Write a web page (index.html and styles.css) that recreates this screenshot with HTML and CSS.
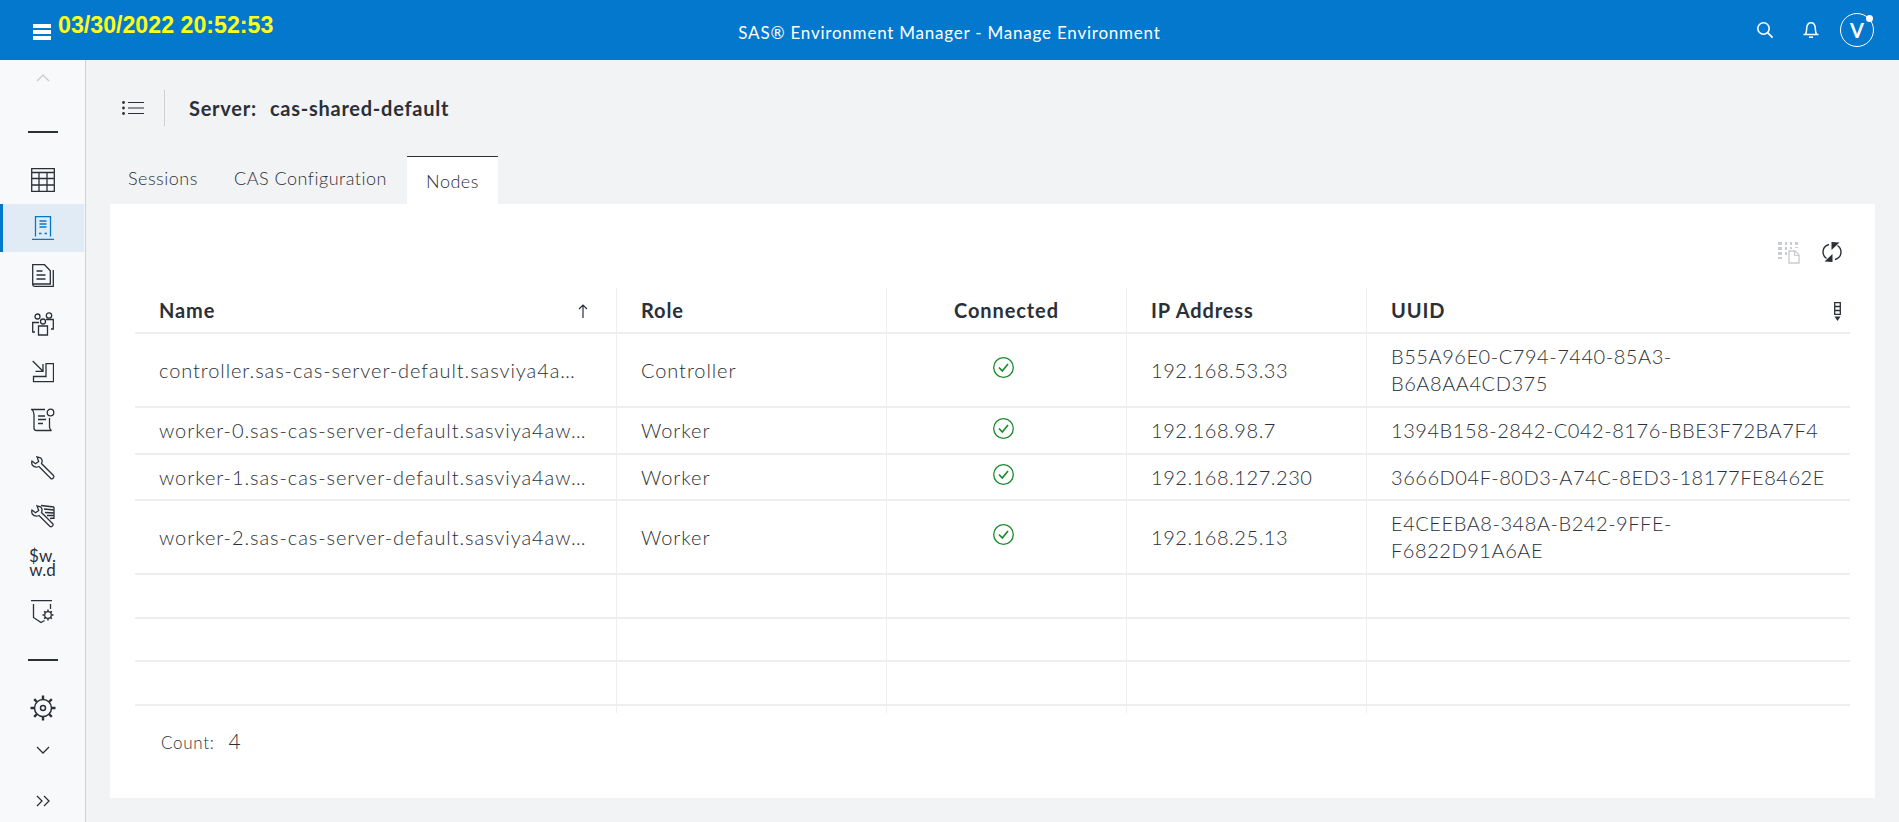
FILE: index.html
```html
<!DOCTYPE html>
<html lang="en">
<head>
<meta charset="utf-8">
<title>SAS Environment Manager</title>
<link rel="stylesheet" href="styles.css">
</head>
<body>
<div class="app">
  <header class="topbar">
    <svg class="hamburger" width="18" height="16" viewBox="0 0 18 16"><path d="M0 0h18v4H0zM0 6h18v4H0zM0 12h18v4H0z" fill="#fff"/></svg>
    <div class="clock">03/30/2022 20:52:53</div>
    <div class="apptitle">SAS® Environment Manager - Manage Environment</div>
    <div class="topicons">
      <svg class="ti" width="18" height="18" viewBox="0 0 18 18" fill="none" stroke="#fff" stroke-width="1.6"><circle cx="7.5" cy="7.5" r="5.7"/><path d="M11.6 11.6l5 5"/></svg>
      <svg class="ti last" width="18" height="18" viewBox="0 0 18 18" fill="none" stroke="#fff" stroke-width="1.5"><path d="M1.5 13.5h15M3.5 13c1.2-1.5 1-3.5 1.2-6C5 3.5 7 1.7 9 1.7S13 3.5 13.3 7c.2 2.500 0 4.500 1.200 6"/><path d="M7 16.200h4" stroke-width="1.600"/></svg>
      <div class="avatar">V<span class="dot"></span></div>
    </div>
  </header>
  <div class="body">
    <nav class="sidebar">
      <div class="nav-top"><svg width="14" height="8" viewBox="0 0 14 8" fill="none" stroke="#c4c8cd" stroke-width="1.200"><path d="M1 7l6-6 6 6"/></svg></div>
      <div class="nav-sep"><span></span></div>
      <div class="nav-item"><svg width="24" height="24" viewBox="0 0 24 24" fill="none" stroke="#2b3038" stroke-width="1.300"><path d="M.7 .7h22.600v22.600H.7zM.7 4.500h22.600M.7 10.500h22.600M.7 17h22.600M8 4.500v18.800M16 4.500v18.800"/></svg></div>
      <div class="nav-item active"><svg width="22" height="24" viewBox="0 0 22 24" fill="none" stroke="#0478cd" stroke-width="1.300"><path d="M3.500 20.500V.7h15v19.800M0 23.300h22M7.500 5h7M7.500 8h7M7.500 11h7M7 17.500h2.500M12.500 17.500h2.500"/></svg></div>
      <div class="nav-item"><svg width="22" height="24" viewBox="0 0 22 24" fill="none" stroke="#2b3038" stroke-width="1.300"><path d="M.7 20V.7h11.800l5.800 6V20zM4.500 7h6M4.500 11h9M4.500 15h9M.7 20v.5c0 1 .8 1.800 1.800 1.800h18.800V6"/></svg></div>
      <div class="nav-item"><svg width="22" height="24" viewBox="0 0 22 24" fill="none" stroke="#2b3038" stroke-width="1.300"><circle cx="5.500" cy="4.500" r="2.500"/><circle cx="17" cy="3.500" r="2.700"/><circle cx="11" cy="9.500" r="2.500"/><path d="M6.500 14h9v9h-9zM3 20H.7v-9.500H7M19 17h2.300V7.500H14"/></svg></div>
      <div class="nav-item"><svg width="22" height="24" viewBox="0 0 22 24" fill="none" stroke="#2b3038" stroke-width="1.300"><path d="M.7 1l10.300 10.300M11 4v7.300H3.500M1.500 21.700H21.500V3.700H14V16.500H1.500z"/></svg></div>
      <div class="nav-item"><svg width="24" height="24" viewBox="0 0 24 24" fill="none" stroke="#2b3038" stroke-width="1.300"><path d="M14 1.500H.7c1.500 1 2.300 2.300 2.300 5v13.500c0 1.500 1 2.500 2.500 2.500h15c-1.200-.6-2-1.500-2-3.500V10M7 8h7M7 11.500h8M7 15.500h5"/><circle cx="19.500" cy="4.500" r="3.300"/></svg></div>
      <div class="nav-item"><svg width="24" height="24" viewBox="0 0 24 24" fill="none" stroke="#2b3038" stroke-width="1.300"><path d="M6 .8L9.500 1.800C11 3 11.500 5.500 10.500 7.500L22.500 19.500C23.500 21 22 23.500 20 22.800L8 10.500C5.500 11.500 3 11 1.500 9.300.7 8 .5 6.500 1 5L4.500 7.800 7.700 5.500z"/></svg></div>
      <div class="nav-item"><svg width="24" height="24" viewBox="0 0 24 24" fill="none" stroke="#2b3038" stroke-width="1.300"><path d="M6 1.800L9.500 2.800C11 4 11.500 6 10.500 8.500L21.500 19.500C23 21 21 23.500 19 22.500L8 11.500C5.500 12.500 3 12 1.500 10.300.7 9 .5 7.500 1 6L4.500 8.800 7.700 6.500z"/><path d="M10 1.500l13 1.500M13 5l10 1M14 8.500l9 .5M16 11.500h6.500M19 14.500l3.500-.5M23 3v12"/></svg></div>
      <div class="nav-item fmt">$w.<br>w.d</div>
      <div class="nav-item"><svg width="24" height="24" viewBox="0 0 24 24" fill="none" stroke="#2b3038" stroke-width="1.300"><path d="M0 .7h21M2.500 4v13.500l7.500 5 3.500-2M19.500 4v5"/><circle cx="17" cy="15" r="3.300"/><path d="M17 9.500v2M17 18.500v2M11.500 15h2M20.500 15h2M13.200 11.200l1.400 1.400M19.400 17.400l1.400 1.400M20.800 11.200l-1.400 1.400M14.600 17.400l-1.400 1.400" stroke-width="1.500"/></svg></div>
      <div class="nav-sep"><span></span></div>
      <div class="nav-item"><svg width="26" height="26" viewBox="0 0 26 26" fill="none" stroke="#2b3038" stroke-width="1.500"><circle cx="13" cy="13" r="8.500"/><circle cx="13" cy="13" r="2.500"/><path d="M13 .5v4M13 21.500v4M.5 13h4M21.500 13h4M4.200 4.200l2.800 2.800M19 19l2.800 2.800M21.800 4.200L19 7M7 19l-2.800 2.800" stroke-width="2.400"/></svg></div>
      <div class="nav-down"><svg width="14" height="8" viewBox="0 0 14 8" fill="none" stroke="#2b3038" stroke-width="1.300"><path d="M1 1l6 6 6-6"/></svg></div>
      <div class="nav-expand"><svg width="14" height="12" viewBox="0 0 14 12" fill="none" stroke="#2b3038" stroke-width="1.300"><path d="M1 1l5 5-5 5M8 1l5 5-5 5"/></svg></div>
    </nav>
    <main class="main">
      <div class="titlebar">
        <svg class="listicon" width="22" height="14" viewBox="0 0 22 14" fill="none"><path d="M6 1.500h16M6 7h16M6 12.500h16" stroke="#2b3038" stroke-width="1.200"/><circle cx="1.500" cy="1.500" r="1.400" fill="#2b3038"/><circle cx="1.500" cy="7" r="1.400" fill="#2b3038"/><circle cx="1.500" cy="12.500" r="1.400" fill="#2b3038"/></svg>
        <div class="titlesep"></div>
        <div class="title"><span class="tlabel">Server:</span>cas-shared-default</div>
      </div>
      <div class="tabs">
        <div class="tab t1">Sessions</div>
        <div class="tab t2">CAS Configuration</div>
        <div class="tab active">Nodes</div>
      </div>
      <section class="card">
        <div class="cardtools">
          <svg class="ctool1" width="22" height="22" viewBox="0 0 22 22" fill="none"><path d="M0 0h4v3H0zM0 5h4v3H0zM0 10h4v3H0zM0 15h4v2H0zM7 0h2v3H7zM7 5h2v3H7zM7 10h2v3H7zM12 0h2v3h-2zM17 0h3v3h-3zM12 5h2v2h-2zM17 5h3v1h-3z" fill="#c9ccd1"/><path d="M11 9h6l4 4v8H11z" fill="#fff" stroke="#c9ccd1" stroke-width="1.400"/><path d="M16.500 9v4.500H21" stroke="#c9ccd1" stroke-width="1.200"/></svg>
          <svg class="ctool2" width="20" height="20" viewBox="0 0 20 20" fill="none"><path d="M7 2.500C3.500 3.500 1 6.500 1 10c0 2.800 1.400 5 3.500 6.500M13 17.500c3.500-1 6-4 6-7.500 0-2.800-1.400-5-3.500-6.500" stroke="#2b3038" stroke-width="1.400"/><path d="M9.500 0l8 .5-8 7.500zM2.500 19.500l8 .5V12z" fill="#2b3038"/></svg>
        </div>
        <div class="grid">
          <div class="row head">
            <div class="cell">Name<svg class="sort" width="10" height="14" viewBox="0 0 10 14" fill="none" stroke="#2b3038" stroke-width="1.200"><path d="M5 14V1M1 5l4-4 4 4"/></svg></div>
            <div class="cell">Role</div>
            <div class="cell center">Connected</div>
            <div class="cell">IP Address</div>
            <div class="cell">UUID<svg class="colmenu" width="7" height="19" viewBox="0 0 7 19"><path d="M.7 .7h5.600v11.600H.7zM.7 4.500h5.600M.7 8.500h5.600" fill="none" stroke="#2b3038" stroke-width="1.300"/><path d="M.5 14.500h6L3.500 19z" fill="#2b3038"/></svg></div>
          </div>
          <div class="row tall">
            <div class="cell"><span>controller.sas-cas-server-default.sasviya4a…</span></div>
            <div class="cell">Controller</div>
            <div class="cell center"><svg class="ok" width="21" height="21" viewBox="0 0 21 21" fill="none" stroke="#1a8a2e" stroke-width="1.300"><circle cx="10.500" cy="10.500" r="9.800"/><path d="M6 10.500l3.300 3.500 5.700-7" stroke-width="1.700"/></svg></div>
            <div class="cell"><span class="num">192.168.53.33</span></div>
            <div class="cell"><span class="num">B55A96E0-C794-7440-85A3-<br>B6A8AA4CD375</span></div>
          </div>
          <div class="row r47">
            <div class="cell"><span>worker-0.sas-cas-server-default.sasviya4aw…</span></div>
            <div class="cell">Worker</div>
            <div class="cell center"><svg class="ok" width="21" height="21" viewBox="0 0 21 21" fill="none" stroke="#1a8a2e" stroke-width="1.300"><circle cx="10.500" cy="10.500" r="9.800"/><path d="M6 10.500l3.300 3.500 5.700-7" stroke-width="1.700"/></svg></div>
            <div class="cell"><span class="num">192.168.98.7</span></div>
            <div class="cell"><span class="num">1394B158-2842-C042-8176-BBE3F72BA7F4</span></div>
          </div>
          <div class="row r46">
            <div class="cell"><span>worker-1.sas-cas-server-default.sasviya4aw…</span></div>
            <div class="cell">Worker</div>
            <div class="cell center"><svg class="ok" width="21" height="21" viewBox="0 0 21 21" fill="none" stroke="#1a8a2e" stroke-width="1.300"><circle cx="10.500" cy="10.500" r="9.800"/><path d="M6 10.500l3.300 3.500 5.700-7" stroke-width="1.700"/></svg></div>
            <div class="cell"><span class="num">192.168.127.230</span></div>
            <div class="cell"><span class="num">3666D04F-80D3-A74C-8ED3-18177FE8462E</span></div>
          </div>
          <div class="row tall">
            <div class="cell"><span>worker-2.sas-cas-server-default.sasviya4aw…</span></div>
            <div class="cell">Worker</div>
            <div class="cell center"><svg class="ok" width="21" height="21" viewBox="0 0 21 21" fill="none" stroke="#1a8a2e" stroke-width="1.300"><circle cx="10.500" cy="10.500" r="9.800"/><path d="M6 10.500l3.300 3.500 5.700-7" stroke-width="1.700"/></svg></div>
            <div class="cell"><span class="num">192.168.25.13</span></div>
            <div class="cell"><span class="num">E4CEEBA8-348A-B242-9FFE-<br>F6822D91A6AE</span></div>
          </div>
          <div class="row r44"><div class="cell"></div><div class="cell"></div><div class="cell"></div><div class="cell"></div><div class="cell"></div></div>
          <div class="row r43"><div class="cell"></div><div class="cell"></div><div class="cell"></div><div class="cell"></div><div class="cell"></div></div>
          <div class="row r44"><div class="cell"></div><div class="cell"></div><div class="cell"></div><div class="cell"></div><div class="cell"></div></div>
          <div class="row stub"><div class="cell"></div><div class="cell"></div><div class="cell"></div><div class="cell"></div><div class="cell"></div></div>
        </div>
        <div class="count"><span class="clabel">Count:</span><span class="cval">4</span></div>
      </section>
    </main>
  </div>
</div>
</body>
</html>
```
FILE: styles.css
```css
* { box-sizing: border-box; }
html, body { margin: 0; height: 100%; overflow: hidden; }
body { font-family: Lato, "Open Sans", sans-serif; color: #2b3038; background: #f2f3f5; }
.app { width: 1899px; height: 822px; display: flex; flex-direction: column; }
.topbar { height: 60px; flex: none; background: #0478cd; position: relative; display: flex; align-items: center; justify-content: center; color: #fff; }
.hamburger { position: absolute; left: 33px; top: 24px; }
.clock { position: absolute; left: 58px; top: 11px; font: bold 23.2px/28px "Liberation Sans", Arial, sans-serif; color: #ffff19; }
.apptitle { font-size: 17px; line-height: 20px; margin-top: 6px; letter-spacing: .78px; }
.topicons { position: absolute; right: 25px; top: 0; height: 60px; display: flex; align-items: center; }
.ti { margin-right: 28px; }
.ti.last { margin-right: 20px; }
.avatar { width: 34px; height: 34px; border: 1px solid #fff; border-radius: 50%; display: flex; align-items: center; justify-content: center; font-weight: 700; font-size: 20px; position: relative; }
.dot { position: absolute; right: 0; top: 1px; width: 7px; height: 7px; border-radius: 50%; background: #fff; }
.body { flex: 1; display: flex; min-height: 0; }
.sidebar { width: 86px; flex: none; background: #f8f9fb; border-right: 1px solid #cdd0d5; display: flex; flex-direction: column; }
.nav-top { height: 48px; display: flex; align-items: flex-start; justify-content: center; padding-top: 14px; }
.nav-sep { height: 48px; display: flex; align-items: center; justify-content: center; }
.nav-sep span { width: 30px; height: 2px; background: #2b3038; }
.nav-item { height: 48px; display: flex; align-items: center; justify-content: center; border-left: 3px solid transparent; padding-right: 3px; }
.nav-item.active { background: #e0ebf5; border-left-color: #0478cd; margin-right: 1px; padding-right: 2px; }
.nav-item.fmt { display: block; font: 400 17px/14px Lato, sans-serif; text-align: center; padding-top: 9px; color: #2b3038; }
.nav-down { height: 36px; display: flex; align-items: center; justify-content: center; }
.nav-expand { height: 36px; display: flex; align-items: center; justify-content: center; margin-top: 15px; }
.main { flex: 1; display: flex; flex-direction: column; min-width: 0; padding: 30px 24px 24px; }
.titlebar { height: 36px; display: flex; align-items: center; padding-left: 12px; flex: none; }
.listicon { flex: none; }
.titlesep { width: 1px; height: 36px; background: #cdd0d5; margin: 0 24px 0 20px; }
.title { font-size: 20px; font-weight: 700; letter-spacing: .75px; color: #2b3038; }
.tlabel { margin-right: 13px; }
.tabs { height: 48px; margin-top: 30px; display: flex; align-items: stretch; flex: none; }
.tab { font-size: 18px; font-weight: 300; letter-spacing: .5px; color: #2b3038; display: flex; align-items: center; justify-content: center; }
.t1 { margin-left: 18px; width: 106px; justify-content: flex-start; padding-bottom: 4px; }
.t2 { width: 173px; justify-content: flex-start; padding-bottom: 4px; }
.tab.active { width: 91px; background: #fff; border-top: 1px solid #2b3038; }
.card { flex: 1; background: #fff; padding: 0 25px; min-height: 0; display: flex; flex-direction: column; }
.cardtools { height: 84px; flex: none; display: flex; align-items: flex-start; justify-content: flex-end; padding-top: 38px; }
.ctool1 { margin-right: 22px; }
.ctool2 { margin-right: 8px; }
.grid { flex: none; }
.row { display: grid; grid-template-columns: 481px 270px 240px 240px 484px; border-bottom: 2px solid #eceef0; }
.cell { border-left: 1px solid #eceef0; padding: 0 20px 0 24px; display: flex; align-items: center; font-size: 20px; font-weight: 300; letter-spacing: .92px; line-height: 27px; color: #2b3038; min-width: 0; position: relative; white-space: nowrap; }
.cell:first-child { border-left: 0; }
.num { letter-spacing: .55px; }
.head { height: 46px; }
.head .cell { font-weight: 700; letter-spacing: .9px; color: #2b3038; }
.cell.center { justify-content: center; padding: 0; }
.sort { position: absolute; right: 28px; top: 16px; }
.colmenu { position: absolute; right: 9px; top: 14px; }
.tall { height: 74px; }
.r47 { height: 47px; }
.r46 { height: 46px; }
.r44 { height: 44px; }
.r43 { height: 43px; }
.stub { height: 7px; border-bottom: 0; }
.ok { margin: -5px 6px 0 0; }
.count { display: flex; align-items: baseline; padding: 15px 0 0 26px; }
.clabel { font-size: 17px; font-weight: 300; letter-spacing: .7px; margin-right: 14px; color: #2b3038; }
.cval { font-size: 21px; font-weight: 300; }
```
